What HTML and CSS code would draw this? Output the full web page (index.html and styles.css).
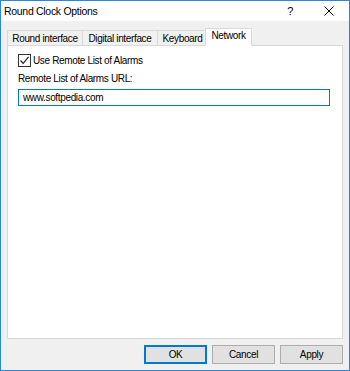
FILE: index.html
```html
<!DOCTYPE html>
<html lang="en">
<head>
  <meta charset="UTF-8" />
  <title>Round Clock Options</title>
  <link rel="stylesheet" href="styles.css">
</head>
<body>
  <div class="window">
    <div class="titlebar">
      <span class="title">Round Clock Options</span>
      <span class="help">?</span>
      <span class="close">
        <svg width="10" height="10" viewBox="0 0 10 10">
          <path d="M0.5 0.5 L9.5 9.5 M9.5 0.5 L0.5 9.5" stroke="#000" stroke-width="1" fill="none"/>
        </svg>
      </span>
    </div>

    <div class="client">
      <!-- Tabs -->
      <div class="tabs">
        <div class="tab tab-round">Round interface</div>
        <div class="tab tab-digital">Digital interface</div>
        <div class="tab tab-keyboard">Keyboard</div>
        <div class="tab tab-network active">Network</div>
      </div>

      <div class="panel">
        <label class="check-row">
          <span class="checkbox">
            <svg width="11" height="11" viewBox="0 0 11 11">
              <path d="M1.5 5.5 L4.2 8.3 L9.6 1.8" stroke="#222" stroke-width="1.2" fill="none"/>
            </svg>
          </span>
          Use Remote List of Alarms
        </label>
        <div class="field-label">Remote List of Alarms URL:</div>
        <div class="textbox">www.softpedia.com</div>
      </div>

      <div class="footer">
        <button class="btn default">OK</button>
        <button class="btn">Cancel</button>
        <button class="btn">Apply</button>
      </div>
    </div>
  </div>
</body>
</html>
```

FILE: styles.css
```css
* {
  box-sizing: border-box;
}

body {
  margin: 0;
  font-family: 'Liberation Sans', Arial, sans-serif;
  font-size: 10px;
  letter-spacing: -0.35px;
  color: #000;
  background-color: #fff;
}

.window {
  width: 350px;
  height: 371px;
  border: 1px solid #2b87d8;
  display: flex;
  flex-direction: column;
  overflow: hidden;
}

.titlebar {
  height: 20px;
  background-color: #fff;
  display: flex;
  align-items: center;
  padding-left: 3px;
}

.title {
  flex: 1;
  font-size: 10.5px;
  letter-spacing: -0.3px;
}

.help {
  font-size: 11px;
  margin-right: 31px;
}

.close {
  display: flex;
  margin-right: 15px;
}

.client {
  flex: 1;
  background-color: #f0f0f0;
  padding: 7px 6px 6px 6px;
  display: flex;
  flex-direction: column;
}

.tabs {
  display: flex;
  align-items: flex-end;
  margin-bottom: -1px;
}

.tab {
  height: 16px;
  border: 1px solid #d9d9d9;
  border-right: none;
  background-color: #f0f0f0;
  line-height: 15px;
  text-align: center;
  white-space: nowrap;
}

.tab-round {
  width: 75px;
}

.tab-digital {
  width: 75px;
}

.tab-keyboard {
  width: 50px;
}

.tab.active {
  position: relative;
  z-index: 1;
  width: 47px;
  height: 18px;
  margin-left: -2px;
  border-right: 1px solid #d9d9d9;
  border-bottom: 1px solid #fff;
  background-color: #fff;
  line-height: 14px;
}

.panel {
  flex: 1;
  background-color: #fff;
  border: 1px solid #d9d9d9;
  padding: 8px 12px 0 10px;
}

.check-row {
  display: flex;
  align-items: center;
  height: 13px;
  margin-bottom: 5px;
}

.checkbox {
  width: 13px;
  height: 13px;
  border: 1px solid #333;
  background-color: #fff;
  margin-right: 2px;
  display: flex;
  align-items: center;
  justify-content: center;
}

.field-label {
  height: 14px;
  line-height: 14px;
  margin-bottom: 3px;
}

.textbox {
  height: 17px;
  border: 1px solid #0078d7;
  padding-left: 4px;
  line-height: 15px;
}

.footer {
  display: flex;
  justify-content: flex-end;
  gap: 5px;
  padding-top: 6px;
}

.btn {
  width: 63px;
  height: 19px;
  padding: 0;
  font-family: inherit;
  font-size: 10px;
  letter-spacing: -0.35px;
  background-color: #e1e1e1;
  border: 1px solid #adadad;
  color: #000;
}

.btn.default {
  border-color: #0078d7;
  box-shadow: inset 0 0 0 1px #0078d7;
}
```
